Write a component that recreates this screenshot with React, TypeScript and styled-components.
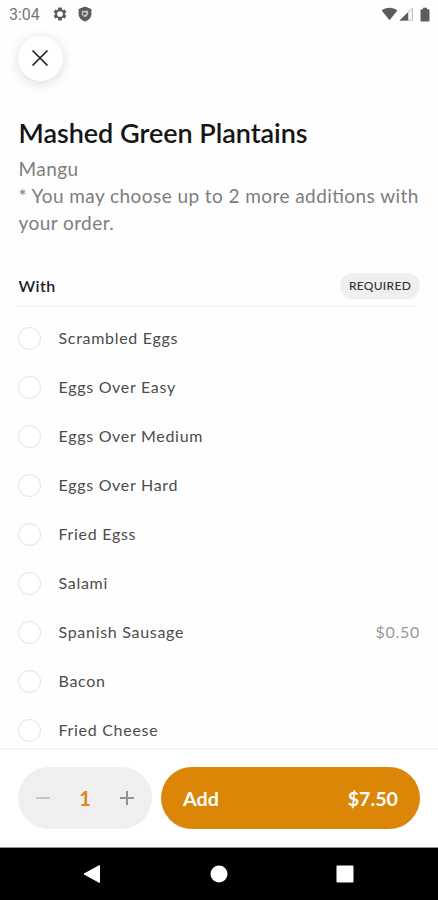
import React from 'react';
import styled, { createGlobalStyle } from 'styled-components';

const GlobalStyle = createGlobalStyle`
  * { box-sizing: border-box; }
  body { margin: 0; background: #fefefe; }
  button { font: inherit; border: 0; padding: 0; }
`;

const Screen = styled.div`
  width: 438px;
  height: 900px;
  display: flex;
  flex-direction: column;
  overflow: hidden;
  background: #fefefe;
  font-family: Lato, sans-serif;
  color: #222;
`;

const StatusBar = styled.header`
  height: 28px;
  flex: none;
  display: flex;
  align-items: center;
  padding: 0 8px 0 9px;
  color: #5c5c5c;
  svg { display: block; flex: none; }
`;

const Clock = styled.span`
  width: 43px;
  font: 400 16px/28px Roboto, sans-serif;
  color: #777;
  padding-top: 1px;
`;

const StatusGroup = styled.div<{ $gap: number; $end?: boolean }>`
  display: flex;
  align-items: center;
  gap: ${p => p.$gap}px;
  margin-left: ${p => (p.$end ? 'auto' : '0')};
`;

const Content = styled.main`
  flex: 1;
  min-height: 0;
  overflow: hidden;
  padding: 8px 18px 0;
`;

const CloseButton = styled.button`
  width: 45px;
  height: 45px;
  border-radius: 50%;
  background: #fff;
  box-shadow: 0 2px 12px rgba(0, 0, 0, 0.14);
  display: grid;
  place-items: center;
  padding: 0 1px 1px 0;
`;

const Title = styled.h1`
  margin: 35px 0 0 0.5px;
  font-size: 27px;
  line-height: 34px;
  font-weight: 600;
  letter-spacing: -0.03px;
  color: #161616;
  white-space: nowrap;
`;

const Description = styled.p`
  margin: 5px 0 0 0.5px;
  font-size: 19px;
  line-height: 27px;
  letter-spacing: 0.43px;
  font-feature-settings: 'liga' 1;
  color: #7d7d7d;
  white-space: nowrap;
`;

const SectionHeader = styled.div`
  display: flex;
  align-items: center;
  justify-content: space-between;
  height: 41px;
  margin-top: 30px;
  border-bottom: 2px solid #f8f8f8;
`;

const SectionTitle = styled.h2`
  margin: 0 0 0 0.5px;
  font-size: 16px;
  font-weight: 600;
  letter-spacing: 0.4px;
  line-height: 20px;
  color: #222;
`;

const RequiredTag = styled.span`
  width: 80px;
  height: 26px;
  border-radius: 13px;
  background: #efefef;
  font-size: 12px;
  font-weight: 500;
  letter-spacing: 0.3px;
  line-height: 26px;
  text-align: center;
  color: #333;
`;

const OptionList = styled.ul`
  list-style: none;
  margin: 7px 0 0;
  padding: 0;
`;

const Option = styled.li`
  height: 49px;
  display: flex;
  align-items: center;
  font-size: 16px;
  line-height: 20px;
  letter-spacing: 0.7px;
  color: #4c4c4c;
`;

const OptionName = styled.span`
  padding-bottom: 2px;
`;

const Radio = styled.span`
  width: 23px;
  height: 23px;
  margin-right: 17.5px;
  border: 1.5px solid #e2e2e2;
  border-radius: 50%;
  background: #fff;
`;

const OptionPrice = styled.span`
  margin-left: auto;
  padding-bottom: 2px;
  color: #999;
`;

const ActionBar = styled.footer`
  flex: none;
  height: 100px;
  display: flex;
  gap: 9px;
  padding: 17px 18px 0;
  border-top: 2px solid #f5f5f5;
  border-bottom: 1px solid #8f8f8f;
  background: #fff;
`;

const Stepper = styled.div`
  width: 134px;
  height: 62px;
  border-radius: 31px;
  background: #efefef;
  display: flex;
  align-items: center;
  justify-content: space-between;
  padding: 0 17px;
`;

const StepButton = styled.button<{ $dim?: boolean }>`
  background: none;
  display: flex;
  color: ${p => (p.$dim ? '#bdbdbd' : '#929292')};
`;

const Quantity = styled.span`
  font-size: 20px;
  font-weight: 700;
  color: #dc8526;
`;

const AddButton = styled.button`
  flex: 1;
  height: 62px;
  border-radius: 31px;
  background: #db8606;
  color: #fff;
  display: flex;
  align-items: center;
  justify-content: space-between;
  padding: 0 22px;
  font-size: 19.7px;
  font-weight: 700;
`;

const NavBar = styled.nav`
  flex: none;
  height: 52px;
  background: #000;
  display: flex;
  justify-content: space-between;
  align-items: center;
  padding: 0 84px 0 83px;
  svg { display: block; }
`;

const options: { name: string; price?: string }[] = [
  { name: 'Scrambled Eggs' },
  { name: 'Eggs Over Easy' },
  { name: 'Eggs Over Medium' },
  { name: 'Eggs Over Hard' },
  { name: 'Fried Egss' },
  { name: 'Salami' },
  { name: 'Spanish Sausage', price: '$0.50' },
  { name: 'Bacon' },
  { name: 'Fried Cheese' },
];

const GearIcon = () => (
  <svg width="16" height="16" viewBox="0 0 24 24" fill="currentColor">
    <path
      fillRule="evenodd"
      d="M19.4 13a7.500 7.500 0 0 0 0-2l2.200-1.700-2.300-4-2.600 1a8 8 0 0 0-1.700-1L14.600 2.300H9.400L9 5.300a8 8 0 0 0-1.700 1l-2.600-1-2.300 4L4.600 11a7.500 7.500 0 0 0 0 2l-2.200 1.700 2.300 4 2.600-1a8 8 0 0 0 1.700 1l.4 3h5.200l.4-3a8 8 0 0 0 1.700-1l2.600 1 2.300-4zM12 16.300a4.300 4.300 0 1 1 0-8.600 4.300 4.300 0 0 1 0 8.600z"
    />
  </svg>
);

const ShieldIcon = () => (
  <svg width="14" height="16" viewBox="0 0 14 16">
    <path d="M7 .5 13.400 3v5c0 3.600-2.800 6.400-6.400 7.500C3.400 14.400.6 11.600.6 8V3z" fill="currentColor" />
    <path d="M3.800 4.700H10L10.300 8 8.300 10.800 6.300 11 3.800 9z" fill="#c4c4c4" />
    <path d="M5.300 5.800 9 7.700 5.300 9.600z" fill="#555" />
  </svg>
);

const WifiIcon = () => (
  <svg width="17" height="14" viewBox="0 0 17 14">
    <path d="M.7 3.600C5-.2 12-.2 16.300 3.600L8.500 13.300z" fill="currentColor" />
  </svg>
);

const SignalIcon = () => (
  <svg width="15" height="14" viewBox="0 0 15 14">
    <path d="M13.500 1V13.300H1z" fill="#f5f5f5" stroke="#bdbdbd" />
    <path d="M9.200 5.200v8.400H.5z" fill="currentColor" />
  </svg>
);

const BatteryIcon = () => (
  <svg width="10" height="15" viewBox="0 0 10 15">
    <path d="M3 .8h4v1.400h1.500q1 0 1 1v10.300q0 1-1 1h-7q-1 0-1-1V3.200q0-1 1-1H3z" fill="currentColor" />
  </svg>
);

export default function App() {
  return (
    <>
      <GlobalStyle />
      <Screen>
        <StatusBar>
          <Clock>3:04</Clock>
          <StatusGroup $gap={10}>
            <GearIcon />
            <ShieldIcon />
          </StatusGroup>
          <StatusGroup $gap={6} $end>
            <StatusGroup $gap={1}>
              <WifiIcon />
              <SignalIcon />
            </StatusGroup>
            <BatteryIcon />
          </StatusGroup>
        </StatusBar>
        <Content>
          <CloseButton aria-label="Close">
            <svg width="18" height="18" viewBox="0 0 18 18">
              <path d="M1.500 1.500 16.500 16.500M16.500 1.500 1.500 16.500" stroke="#222" strokeWidth="1.700" />
            </svg>
          </CloseButton>
          <Title>Mashed Green Plantains</Title>
          <Description>
            Mangu
            <br />* You may choose up to 2 more additions with
            <br />
            your order.
          </Description>
          <SectionHeader>
            <SectionTitle>With</SectionTitle>
            <RequiredTag>REQUIRED</RequiredTag>
          </SectionHeader>
          <OptionList>
            {options.map(o => (
              <Option key={o.name}>
                <Radio />
                <OptionName>{o.name}</OptionName>
                {o.price && <OptionPrice>{o.price}</OptionPrice>}
              </Option>
            ))}
          </OptionList>
        </Content>
        <ActionBar>
          <Stepper>
            <StepButton $dim aria-label="Decrease">
              <svg width="16" height="16" viewBox="0 0 16 16">
                <path d="M1 8H15" stroke="currentColor" strokeWidth="1.700" />
              </svg>
            </StepButton>
            <Quantity>1</Quantity>
            <StepButton aria-label="Increase">
              <svg width="16" height="16" viewBox="0 0 16 16">
                <path d="M1 8H15M8 1V15" stroke="currentColor" strokeWidth="2" />
              </svg>
            </StepButton>
          </Stepper>
          <AddButton>
            <span>Add</span>
            <span>$7.50</span>
          </AddButton>
        </ActionBar>
        <NavBar>
          <svg width="18" height="20" viewBox="0 0 18 20">
            <path d="M1 10 16.500 1.500v17z" fill="#fff" stroke="#fff" strokeLinejoin="round" />
          </svg>
          <svg width="18" height="18" viewBox="0 0 18 18">
            <circle cx="9" cy="9" r="8.500" fill="#fff" />
          </svg>
          <svg width="18" height="18" viewBox="0 0 18 18">
            <rect x="0.500" y="0.500" width="17" height="17" rx="1" fill="#fff" />
          </svg>
        </NavBar>
      </Screen>
    </>
  );
}
